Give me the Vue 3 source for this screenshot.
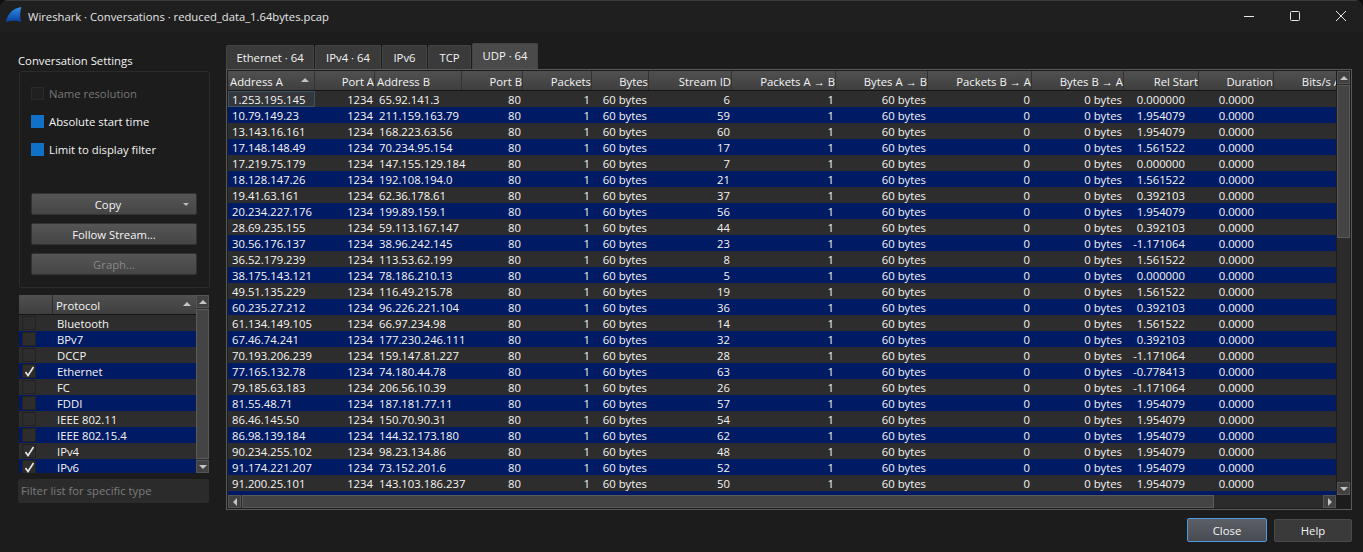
<script setup>
const columns = [
  { label: 'Address A', width: 87, left: true, sort: true },
  { label: 'Port A', width: 60 },
  { label: 'Address B', width: 87, left: true },
  { label: 'Port B', width: 61 },
  { label: 'Packets', width: 69 },
  { label: 'Bytes', width: 57 },
  { label: 'Stream ID', width: 83 },
  { label: 'Packets A → B', width: 104 },
  { label: 'Bytes A → B', width: 92 },
  { label: 'Packets B → A', width: 104 },
  { label: 'Bytes B → A', width: 92 },
  { label: 'Rel Start', width: 75 },
  { label: 'Duration', width: 75 },
  { label: 'Bits/s A', width: 68 },
]

const source = [
  ['1.253.195.145', '65.92.141.3', 6, '0.000000'],
  ['10.79.149.23', '211.159.163.79', 59, '1.954079'],
  ['13.143.16.161', '168.223.63.56', 60, '1.954079'],
  ['17.148.148.49', '70.234.95.154', 17, '1.561522'],
  ['17.219.75.179', '147.155.129.184', 7, '0.000000'],
  ['18.128.147.26', '192.108.194.0', 21, '1.561522'],
  ['19.41.63.161', '62.36.178.61', 37, '0.392103'],
  ['20.234.227.176', '199.89.159.1', 56, '1.954079'],
  ['28.69.235.155', '59.113.167.147', 44, '0.392103'],
  ['30.56.176.137', '38.96.242.145', 23, '-1.171064'],
  ['36.52.179.239', '113.53.62.199', 8, '1.561522'],
  ['38.175.143.121', '78.186.210.13', 5, '0.000000'],
  ['49.51.135.229', '116.49.215.78', 19, '1.561522'],
  ['60.235.27.212', '96.226.221.104', 36, '0.392103'],
  ['61.134.149.105', '66.97.234.98', 14, '1.561522'],
  ['67.46.74.241', '177.230.246.111', 32, '0.392103'],
  ['70.193.206.239', '159.147.81.227', 28, '-1.171064'],
  ['77.165.132.78', '74.180.44.78', 63, '-0.778413'],
  ['79.185.63.183', '206.56.10.39', 26, '-1.171064'],
  ['81.55.48.71', '187.181.77.11', 57, '1.954079'],
  ['86.46.145.50', '150.70.90.31', 54, '1.954079'],
  ['86.98.139.184', '144.32.173.180', 62, '1.954079'],
  ['90.234.255.102', '98.23.134.86', 48, '1.954079'],
  ['91.174.221.207', '73.152.201.6', 52, '1.954079'],
  ['91.200.25.101', '143.103.186.237', 50, '1.954079'],
  ['', '', '', ''],
]

const rows = source.map(([a, b, id, start]) =>
  a ? [a, 1234, b, 80, 1, '60 bytes', id, 1, '60 bytes', 0, '0 bytes', start, '0.0000', ''] : Array(14).fill('')
)

const tabs = [
  { label: 'Ethernet · 64', width: 88 },
  { label: 'IPv4 · 64', width: 66 },
  { label: 'IPv6', width: 45 },
  { label: 'TCP', width: 43 },
  { label: 'UDP · 64', width: 66, active: true },
]

const protocols = [
  { name: 'Bluetooth', on: false },
  { name: 'BPv7', on: false },
  { name: 'DCCP', on: false },
  { name: 'Ethernet', on: true },
  { name: 'FC', on: false },
  { name: 'FDDI', on: false },
  { name: 'IEEE 802.11', on: false },
  { name: 'IEEE 802.15.4', on: false },
  { name: 'IPv4', on: true },
  { name: 'IPv6', on: true },
]
</script>

<template>
  <div class="window">
    <header class="titlebar">
      <svg class="fin" width="16" height="15" viewBox="0 0 16 15">
        <defs>
          <linearGradient id="finFill" x1="0" y1="0" x2="0" y2="1">
            <stop offset="0" stop-color="#2f8fe8" />
            <stop offset="1" stop-color="#0b3f9e" />
          </linearGradient>
        </defs>
        <path d="M0 15 C1.5 7 6.5 1.5 15.5 0 C14 4 13.6 9.5 15 15 C10.5 13.2 5 13.2 0 15 Z" fill="url(#finFill)" />
      </svg>
      <span class="title">Wireshark · Conversations · reduced_data_1.64bytes.pcap</span>
      <div class="controls">
        <svg width="12" height="12" viewBox="0 0 12 12"><path d="M1 6.5H11" stroke="#e6e6e6" /></svg>
        <svg width="12" height="12" viewBox="0 0 12 12"><rect x="1.5" y="1.5" width="9" height="9" rx="1" fill="none" stroke="#e6e6e6" /></svg>
        <svg width="12" height="12" viewBox="0 0 12 12"><path d="M1 1L11 11M11 1L1 11" stroke="#e6e6e6" /></svg>
      </div>
    </header>

    <main class="content">
      <aside class="side">
        <div class="settings-label">Conversation Settings</div>
        <section class="settings">
          <label class="option disabled"><i class="box"></i>Name resolution</label>
          <label class="option"><i class="box checked"></i>Absolute start time</label>
          <label class="option"><i class="box checked"></i>Limit to display filter</label>
          <div class="actions">
            <button class="btn copy">Copy<span class="caret"></span></button>
            <button class="btn">Follow Stream...</button>
            <button class="btn off">Graph...</button>
          </div>
        </section>

        <section class="proto">
          <div class="proto-list">
            <div class="proto-head">
              <span class="proto-check"></span>
              <span class="proto-title">Protocol<i class="sort"></i></span>
            </div>
            <div class="proto-rows">
              <div v-for="(p, i) in protocols" :key="p.name" class="proto-row" :class="{ blue: i % 2 === 1 }">
                <span class="tick">
                  <svg v-if="p.on" width="11" height="11" viewBox="0 0 11 11"><path d="M1.5 6L4 9.5L9.5 1" fill="none" stroke="#e8e8e8" stroke-width="1.6" /></svg>
                </span>
                <span>{{ p.name }}</span>
              </div>
            </div>
          </div>
          <div class="vscroll small">
            <span class="arrow"><i class="up"></i></span>
            <span class="track"><span class="thumb fill"></span></span>
            <span class="arrow"><i class="down"></i></span>
          </div>
        </section>

        <div class="filter">Filter list for specific type</div>
      </aside>

      <section class="main">
        <nav class="tabs">
          <span
            v-for="t in tabs"
            :key="t.label"
            class="tab"
            :class="{ active: t.active }"
            :style="{ width: t.width + 'px' }"
          >{{ t.label }}</span>
        </nav>
        <div class="pane">
          <div class="table-wrap">
            <div class="table">
              <div class="thead">
                <span
                  v-for="c in columns"
                  :key="c.label"
                  class="th"
                  :class="{ left: c.left }"
                  :style="{ width: c.width + 'px' }"
                >{{ c.label }}<i v-if="c.sort" class="sort"></i></span>
              </div>
              <div class="tbody">
                <div v-for="(row, i) in rows" :key="i" class="tr" :class="{ blue: i % 2 === 1 }">
                  <span
                    v-for="(v, j) in row"
                    :key="j"
                    class="td"
                    :class="{ left: columns[j].left, current: i === 0 && j === 0, start: j === 11, dur: j === 12 }"
                    :style="{ width: columns[j].width + 'px' }"
                  >{{ v }}</span>
                </div>
              </div>
            </div>
            <div class="hscroll">
              <span class="arrow"><i class="lt"></i></span>
              <span class="track h"><span class="thumb hthumb"></span></span>
              <span class="arrow"><i class="rt"></i></span>
            </div>
          </div>
          <div class="vscroll big">
            <span class="arrow"><i class="up"></i></span>
            <span class="track"><span class="thumb vthumb"></span></span>
            <span class="arrow"><i class="down"></i></span>
          </div>
        </div>
      </section>
    </main>

    <footer class="footer">
      <button class="btn foot primary">Close</button>
      <button class="btn foot help">Help</button>
    </footer>
  </div>
</template>

<style>
html, body { margin: 0; background: #0e0e0e; }
</style>

<style scoped>
.window {
  width: 1363px;
  height: 552px;
  background: #1c1c1c;
  color: #f4f4f4;
  font-family: "Open Sans", "Noto Sans", sans-serif;
  font-size: 11.3px;
  display: flex;
  flex-direction: column;
  overflow: hidden;
  border-radius: 8px 8px 0 0;
}
.titlebar {
  height: 32px;
  flex: none;
  background: #1f1f1f;
  display: flex;
  align-items: center;
  padding-left: 6px;
  box-sizing: border-box;
  border-top: 1px solid #3a3a3a;
}
.fin { align-self: flex-start; margin-top: 6px; flex: none; }
.title { margin-left: 6px; font-size: 11.25px; color: #e6e6e6; }
.controls { margin-left: auto; display: flex; gap: 34px; margin-right: 16px; margin-bottom: 2px; }
.content { flex: 1; display: flex; min-height: 0; padding-left: 18px; padding-top: 11px; }

.side { width: 193px; flex: none; margin-right: 15px; }
.settings-label { height: 28px; line-height: 36px; }
.settings {
  height: 217px;
  box-sizing: border-box;
  border: 1px solid #2b2b2b;
  border-radius: 2px;
  margin-left: 1px;
  padding: 7px 11px 0;
  width: 191px;
}
.option { display: flex; align-items: center; height: 28px; gap: 5px; }
.option.disabled { color: #777; }
.box { width: 13px; height: 13px; box-sizing: border-box; background: #202020; border: 1px solid #2a2a2a; display: block; }
.box.checked { background: #1071c9; border-color: #1071c9; }
.actions { margin-top: 30px; display: flex; flex-direction: column; gap: 8px; width: 166px; }
.btn {
  height: 22px;
  padding: 0;
  position: relative;
  color: #f4f4f4;
  font: inherit;
  background: linear-gradient(#555, #454545);
  border: 1px solid #333;
  border-radius: 2px;
}
.btn.copy { padding-right: 12px; }
.btn.off { color: #888; }
.caret {
  position: absolute;
  right: 7px;
  top: 9px;
  border: 3px solid transparent;
  border-top: 3px solid #bbb;
  border-bottom: 0;
}

.proto {
  display: flex;
  margin: 7px 0 0 1px;
  height: 178px;
  width: 190px;
  background: #232323;
}
.proto-list { width: 177px; flex: none; overflow: hidden; }
.proto-head {
  height: 20px;
  display: flex;
  background: linear-gradient(#505050, #3f3f3f);
  border-bottom: 1px solid #161616;
  box-sizing: border-box;
}
.proto-check { width: 34px; border-right: 1px solid #2b2b2b; box-sizing: border-box; }
.proto-title { flex: 1; padding-left: 3px; line-height: 21px; position: relative; }
.proto-rows { height: 158px; overflow: hidden; }
.proto-row {
  height: 16px;
  display: flex;
  align-items: center;
  background: #2d2d2d;
}
.proto-row.blue, .tr.blue { background: #001a63; }
.tick {
  width: 14px;
  height: 14px;
  margin: 0 21px 0 3px;
  flex: none;
  box-sizing: border-box;
  background: #2d2d2d;
  border: 1px solid #222;
  display: flex;
  align-items: center;
  justify-content: center;
}
.sort {
  position: absolute;
  right: 5px;
  top: 7px;
  border: 4px solid transparent;
  border-bottom: 4px solid #c4c4c4;
  border-top: 0;
}

.filter {
  margin-top: 6px;
  width: 188px;
  height: 24px;
  line-height: 24px;
  padding-left: 3px;
  background: #2b2b2b;
  border-radius: 2px;
  color: #7d7d7d;
}

.main { flex: 1; min-width: 0; display: flex; flex-direction: column; margin-right: 11px; }
.tabs { display: flex; gap: 1px; height: 26px; align-items: flex-end; }
.tab {
  height: 24px;
  line-height: 23px;
  text-align: center;
  background: #3a3a3a;
  border: 1px solid #444;
  border-bottom: 0;
  border-radius: 2px 2px 0 0;
  box-sizing: border-box;
}
.tab.active { height: 26px; line-height: 24px; background: #4a4a4a; }
.pane {
  flex: none;
  height: 441px;
  display: flex;
  border: 1px solid #5a5a5a;
  box-sizing: border-box;
  background: #1c1c1c;
  padding: 1px;
}
.table-wrap { flex: 1; min-width: 0; display: flex; flex-direction: column; }
.table { height: 424px; overflow: hidden; }
.thead { display: flex; height: 20px; background: linear-gradient(#505050, #3f3f3f); border-bottom: 1px solid #161616; box-sizing: border-box; overflow: hidden; }
.th {
  flex: none;
  box-sizing: border-box;
  text-align: right;
  line-height: 22px;
  padding: 0;
  border-right: 1px solid #333;
  position: relative;
  white-space: nowrap;
  overflow: hidden;
}
.th.left { text-align: left; padding-left: 2px; }
.tbody { height: 404px; overflow: hidden; }
.tr { display: flex; height: 16px; background: #2d2d2d; overflow: hidden; }
.td {
  flex: none;
  box-sizing: border-box;
  text-align: right;
  height: 16px;
  line-height: 18px;
  padding: 0 2px 0 3px;
  white-space: pre;
}
.td.left { text-align: left; padding-left: 4px; }
.td.current { background: #33363a; outline: 1px solid #3c5566; outline-offset: -1px; }
.td.start { padding-right: 14px; }
.td.dur { padding-right: 20px; }

.vscroll { width: 13px; flex: none; display: flex; flex-direction: column; }
.vscroll.big { margin-left: 1px; height: 424px; }
.arrow {
  flex: none;
  width: 13px;
  height: 13px;
  box-sizing: border-box;
  background: #414141;
  border: 1px solid #555;
  display: flex;
  align-items: center;
  justify-content: center;
}
.track { flex: 1; display: flex; flex-direction: column; background: #2b2b2b; min-height: 0; }
.thumb { background: #444; border: 1px solid #5a5a5a; box-sizing: border-box; }
.thumb.fill { flex: 1; margin: 1px 0; }
.vthumb { height: 153px; width: 13px; margin-top: 1px; }
.hscroll { height: 13px; display: flex; }
.track.h { flex-direction: row; }
.hthumb { width: 972px; height: 13px; margin-left: 1px; }
.up, .down, .lt, .rt { display: block; width: 0; height: 0; border: 4px solid transparent; }
.up { border-bottom-color: #c4c4c4; border-top: 0; }
.down { border-top-color: #c4c4c4; border-bottom: 0; }
.lt { border-right-color: #c4c4c4; border-left: 0; }
.rt { border-left-color: #c4c4c4; border-right: 0; }

.footer { height: 42px; flex: none; display: flex; justify-content: flex-end; gap: 7px; padding-right: 11px; padding-top: 8px; box-sizing: border-box; }
.foot { width: 78px; height: 23px; background: #3a3a3a; border-color: #4a4a4a; }
.foot.help { margin-top: 1px; }
.foot.primary { width: 80px; height: 24px; background: linear-gradient(#5b5f66, #484c52); border-color: #4d9be0; }
</style>
